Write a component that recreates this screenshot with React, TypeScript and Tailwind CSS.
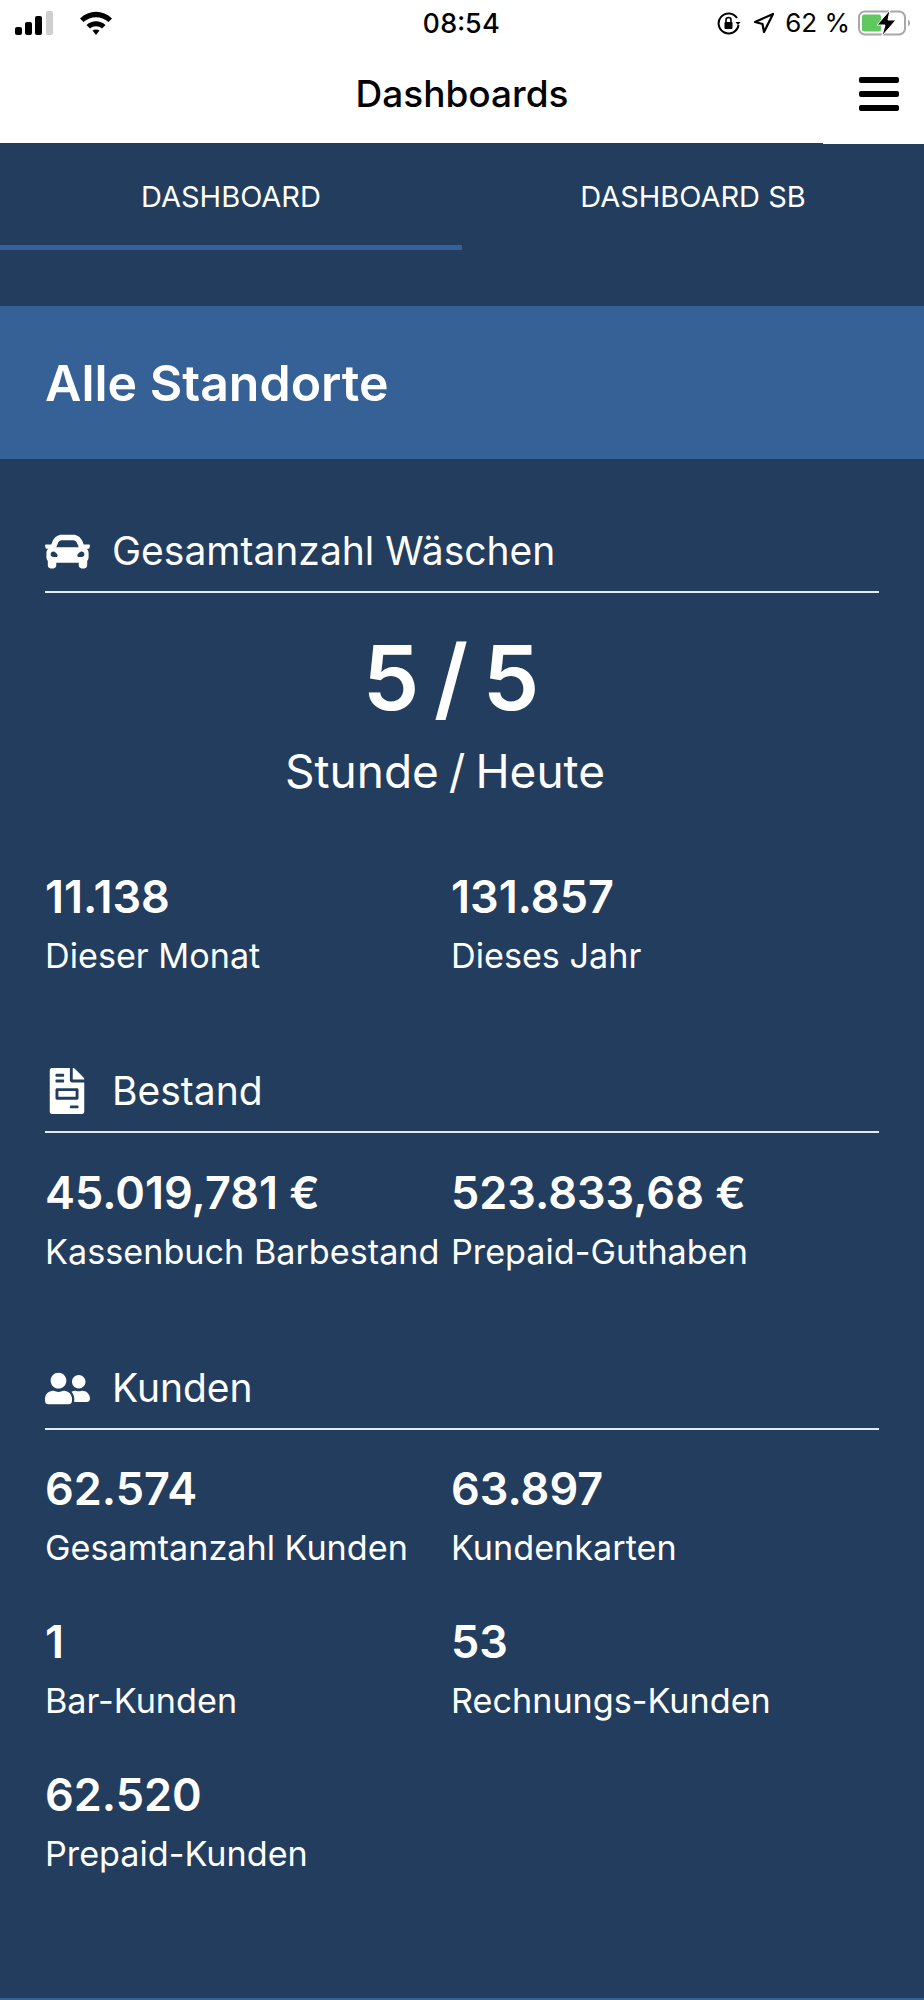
import { FaCar, FaFileInvoice, FaUserFriends } from "react-icons/fa";
import { ReactNode } from "react";

function StatusBar() {
  return (
    <div className="flex h-[48px] items-center pb-[2px] pl-[15px] pr-[12px] text-black">
      <div className="flex flex-1 items-center gap-[26px]">
        <svg width="38" height="26" viewBox="0 0 38 26">
          <rect x="0" y="17" width="7" height="8" rx="2" fill="#000" />
          <rect x="10" y="12" width="7" height="13" rx="2" fill="#000" />
          <rect x="20" y="6" width="7" height="19" rx="2" fill="#000" />
          <rect x="31" y="1" width="7" height="24" rx="2" fill="#cfcfcf" />
        </svg>
        <svg width="34" height="26" viewBox="0 0 34 26">
          <path d="M1 8.5C10 -0.5 24 -0.5 33 8.5L29.5 12C22.5 5.5 11.5 5.5 4.5 12Z" fill="#000" />
          <path d="M7.5 15C13 10 21 10 26.5 15L23 18.5C19.5 15.5 14.5 15.5 11 18.5Z" fill="#000" />
          <path d="M13.5 20.5C15.5 19 18.5 19 20.5 20.5L17 25Z" fill="#000" />
        </svg>
      </div>
      <div className="mr-[5px] text-[27px] leading-none font-medium tabular-nums">08:54</div>
      <div className="flex flex-1 items-center justify-end">
        <svg width="24" height="24" viewBox="0 0 24 24" className="mr-[12px]">
          <path d="M20 7A10 10 0 1 0 21.5 14" fill="none" stroke="#000" strokeWidth="2" />
          <path d="M18.5 11h5l-2.5 3z" fill="#000" />
          <rect x="7.5" y="11" width="8" height="7" rx="1" fill="#000" />
          <path d="M9 11V9a2.5 2.5 0 0 1 5 0v2" fill="none" stroke="#000" strokeWidth="1.6" />
        </svg>
        <svg width="22" height="22" viewBox="0 0 22 22" className="mr-[10px]">
          <path d="M20 2L11 20L9.5 12L2 10Z" fill="none" stroke="#000" strokeWidth="2.2" strokeLinejoin="round" />
        </svg>
        <span className="mr-[8px] text-[26px] leading-none">62 %</span>
        <svg width="54" height="26" viewBox="0 0 54 26">
          <rect x="1" y="1.5" width="46" height="23" rx="6" fill="none" stroke="#a8a8a8" strokeWidth="2" />
          <rect x="4" y="4.5" width="19" height="17" rx="2" fill="#5fc95f" />
          <path d="M50 9.5a4 4 0 0 1 0 7z" fill="#a8a8a8" />
          <path d="M32 0L19 15h8l-3 11 14-16h-8z" fill="#000" stroke="#fff" strokeWidth="1" />
        </svg>
      </div>
    </div>
  );
}

function SectionTitle({ icon, title }: { icon: ReactNode; title: string }) {
  return (
    <div className="flex items-center border-b-2 border-[#e6eaee] pb-[20px]">
      <div className="flex h-[40px] w-[67px] items-center">{icon}</div>
      <span className="text-[39px] leading-[40px]">{title}</span>
    </div>
  );
}

function Stat({ value, label }: { value: string; label: string }) {
  return (
    <div>
      <div className="text-[45px] leading-[58px] font-semibold">{value}</div>
      <div className="mt-[7px] text-[34.2px] leading-[45px] whitespace-nowrap">{label}</div>
    </div>
  );
}

export default function App() {
  return (
    <div className="flex h-[2000px] flex-col bg-[#223d5d] font-['Inter',sans-serif] text-white">
      <div className="h-[143px] bg-white">
        <StatusBar />
        <div className="relative flex h-[94px] items-center justify-center pb-[4px] text-black">
          <span className="text-[37px] leading-none font-medium">Dashboards</span>
          <div className="absolute top-[29px] right-[25px] flex w-[40px] flex-col gap-[8px]">
            <div className="h-[6px] rounded-[2px] bg-black" />
            <div className="h-[6px] rounded-[2px] bg-black" />
            <div className="h-[6px] rounded-[2px] bg-black" />
          </div>
        </div>
      </div>

      <div className="relative flex h-[107px] text-[29px]">
        <div className="absolute top-0 right-0 h-[1px] w-[101px] bg-white" />
        <div className="flex w-1/2 items-center justify-center border-b-[5px] border-[#34619b] pt-[5px]">DASHBOARD</div>
        <div className="flex w-1/2 items-center justify-center">DASHBOARD SB</div>
      </div>

      <div className="mt-[56px] flex h-[153px] items-center bg-[#356197] px-[45px]">
        <h1 className="text-[50px] leading-none font-semibold">Alle Standorte</h1>
      </div>

      <div className="flex grow flex-col px-[45px] pt-[72px]">
        <SectionTitle icon={<FaCar className="h-[45px] w-[45px] shrink-0" />} title="Gesamtanzahl Wäschen" />
        <div className="mt-[35px] text-center">
          <div className="pr-[22px] text-[90px] leading-[100px] font-semibold [word-spacing:-8px]">5 / 5</div>
          <div className="mt-[13px] pr-[34px] text-[46px] leading-[60px] [word-spacing:-3px]">Stunde / Heute</div>
        </div>
        <div className="mt-[67px] grid grid-cols-[406px_1fr]">
          <Stat value="11.138" label="Dieser Monat" />
          <Stat value="131.857" label="Dieses Jahr" />
        </div>

        <div className="mt-[93px]">
          <SectionTitle icon={<FaFileInvoice className="ml-[4px] h-[46px] w-[36px] shrink-0" />} title="Bestand" />
        </div>
        <div className="mt-[31px] grid grid-cols-[406px_1fr]">
          <Stat value="45.019,781 €" label="Kassenbuch Barbestand" />
          <Stat value="523.833,68 €" label="Prepaid-Guthaben" />
        </div>

        <div className="mt-[94px]">
          <SectionTitle icon={<FaUserFriends className="h-[45px] w-[45px] shrink-0" />} title="Kunden" />
        </div>
        <div className="mt-[30px] grid grid-cols-[406px_1fr] gap-y-[43px]">
          <Stat value="62.574" label="Gesamtanzahl Kunden" />
          <Stat value="63.897" label="Kundenkarten" />
          <Stat value="1" label="Bar-Kunden" />
          <Stat value="53" label="Rechnungs-Kunden" />
          <Stat value="62.520" label="Prepaid-Kunden" />
        </div>
      </div>
      <div className="h-[2px] bg-[#356197]" />
    </div>
  );
}
